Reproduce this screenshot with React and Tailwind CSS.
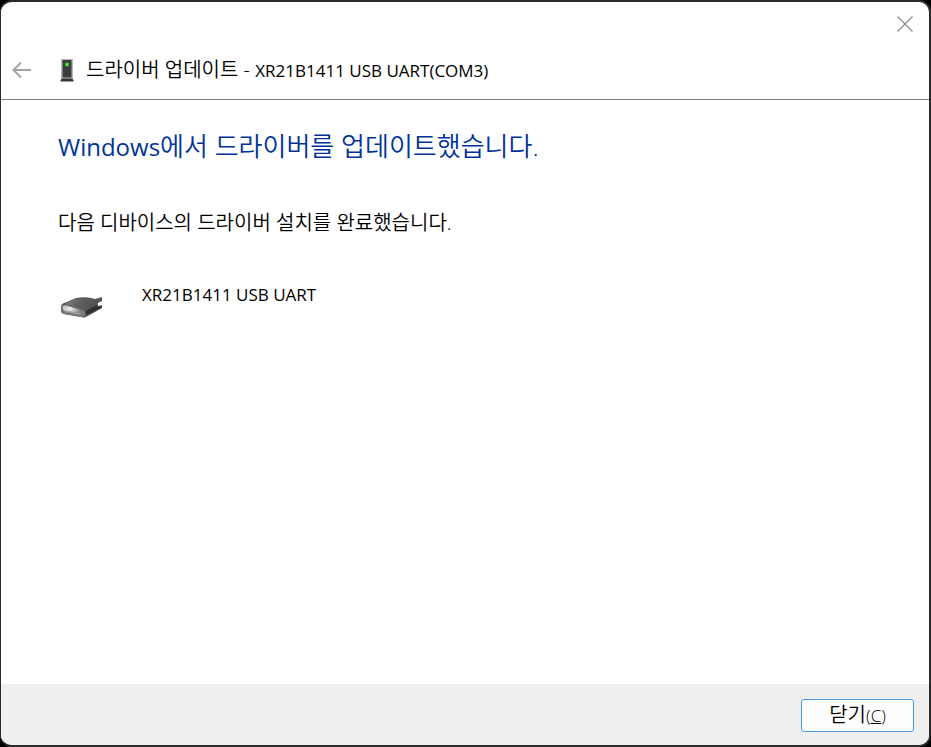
function BackArrow() {
  return (
    <svg viewBox="0 0 20 18" className="h-[18px] w-5" fill="none" stroke="#a3a3a3" strokeWidth="2" aria-hidden="true">
      <path d="M19 9H2M9 1.5L1.5 9L9 16.5" />
    </svg>
  );
}

function DeviceTower() {
  return (
    <svg viewBox="0 0 14 24" className="h-6 w-3.5" aria-hidden="true">
      <rect x="1" y="1" width="12" height="20" fill="#b4b8bb" />
      <rect x="2.5" y="2" width="9" height="17.5" fill="#3a3b3d" />
      <rect x="5" y="4.5" width="4" height="4" fill="#2c8c2c" />
      <rect x="5.5" y="5" width="3" height="3" fill="#35f035" />
      <path d="M2 20.5H12L13.5 22V23.5H0.5V22Z" fill="#33373b" />
    </svg>
  );
}

function Connector() {
  return (
    <svg viewBox="0 0 44 24" className="h-6 w-11" aria-hidden="true">
      <defs>
        <linearGradient id="shell" x1="0" y1="0" x2="1" y2="0.3">
          <stop offset="0" stopColor="#8b8b8b" />
          <stop offset="0.45" stopColor="#626262" />
          <stop offset="1" stopColor="#505050" />
        </linearGradient>
        <linearGradient id="plug" x1="0" y1="0" x2="1" y2="0.3">
          <stop offset="0" stopColor="#b9b9b9" />
          <stop offset="0.5" stopColor="#e9e9e9" />
          <stop offset="1" stopColor="#858585" />
        </linearGradient>
      </defs>
      <path d="M1 11Q2 8 7 7L16 3Q27 1 35 4L42 2V6L38 8V11L42 10V13L35 17L26 22Q24 23 21 22L4 19Q0 18 1 14Z" fill="#555555" />
      <path d="M5 9L16 4Q27 2 37 5L36 9L25 16Z" fill="url(#shell)" />
      <path d="M1 11Q3 9 7 10L23 15Q26 17 25 21L22 22L4 19Q0 18 1 14Z" fill="#777777" />
      <path d="M3 11Q5 10 8 11L20 15Q23 17 21 19L5 16Q2 15 3 11Z" fill="url(#plug)" />
      <path d="M5 16L20 19" stroke="#a0a0a0" strokeWidth="1.5" />
      <path d="M26 16L37 10V12L41 11V13L26 20Z" fill="#303030" />
    </svg>
  );
}

export default function App() {
  return (
    <div className="flex min-h-screen flex-col bg-black font-['Open_Sans','Noto_Sans_CJK_KR',sans-serif] text-black">
      <main className="flex flex-1 flex-col overflow-hidden rounded-xl border-2 border-l border-[#2b2b2b] bg-white">
        <header className="border-b border-[#7d7d7d]">
          <div className="flex h-11 justify-end pr-4">
            <button type="button" aria-label="닫기" className="h-11">
              <svg viewBox="0 0 16 16" className="size-4" fill="none" stroke="#8c8c8c" strokeWidth="1.2" aria-hidden="true">
                <path d="M0.5 0.5L15.5 15.5M15.5 0.5L0.5 15.5" />
              </svg>
            </button>
          </div>
          <div className="flex h-[53px] items-start pl-[11px] pt-2.5">
            <button type="button" aria-label="뒤로" className="flex h-7 items-center">
              <BackArrow />
            </button>
            <div className="ml-7 flex h-7 items-center">
              <DeviceTower />
            </div>
            <h1 className="ml-3 text-[20px] font-[350] leading-7">
              드라이버 업데이트 - <span className="text-[17px] font-normal">XR21B1411 USB UART(COM3)</span>
            </h1>
          </div>
        </header>
        <section className="flex-1 px-[57px] pt-7">
          <h2 className="text-[26px] font-[350] leading-9 text-[#003399]">
            <span className="text-[24px] font-normal">Windows</span>에서 드라이버를 업데이트했습니다.
          </h2>
          <p className="mt-11 text-[20px] font-[350] leading-7">다음 디바이스의 드라이버 설치를 완료했습니다.</p>
          <div className="mt-11 flex items-start gap-[38px] pl-0.5">
            <div className="pt-3.5">
              <Connector />
            </div>
            <p className="text-[17px] leading-7">XR21B1411 USB UART</p>
          </div>
        </section>
        <footer className="flex h-[61px] items-start justify-end bg-[#efefef] pr-[15px] pt-[15px]">
          <button type="button" className="h-[33px] w-[113px] rounded-[3px] border border-[#4c9adb] bg-[#fdfdfd] text-[20px] font-[350] leading-7">
            닫기<span className="text-[17px]">(<u>C</u>)</span>
          </button>
        </footer>
      </main>
    </div>
  );
}
